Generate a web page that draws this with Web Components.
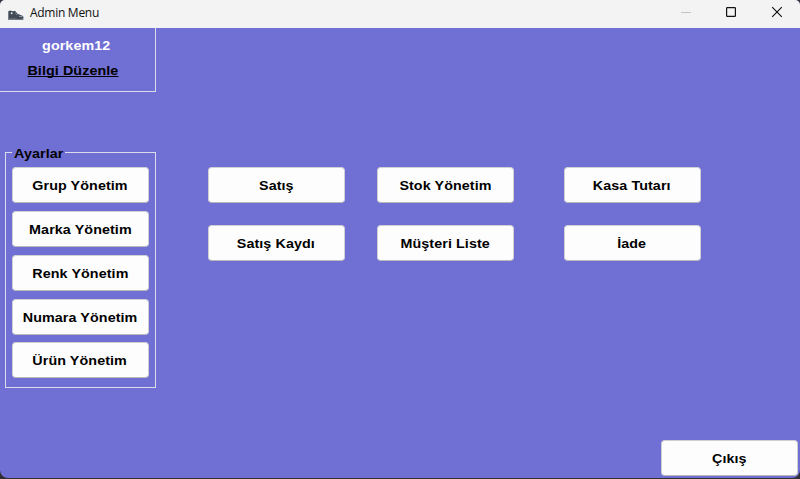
<!DOCTYPE html>
<html lang="tr">
<head>
<meta charset="utf-8">
<title>Admin Menu</title>
<style>
html,body{margin:0;height:100%;overflow:hidden;background:#303034}
body{font:bold 13.5px/16px "Liberation Sans",Arial,sans-serif;letter-spacing:.08px;color:#000}
</style>
</head>
<body>
<admin-window></admin-window>
<script>
const define = (name, html) => customElements.define(name, class extends HTMLElement {
  constructor() {
    super();
    this.attachShadow({ mode: 'open' }).innerHTML = html;
  }
});

define('menu-button', `
<style>
:host{box-sizing:border-box;display:flex;align-items:center;justify-content:center;width:137px;height:36px;padding:2px 1px 0 0;background:#fdfdfd;border:1px solid #d0d0d4;border-bottom-color:#b9b9bd;border-radius:4px;white-space:nowrap}
span{transform:scaleX(1.06)}
</style><span><slot></slot></span>`);

define('title-bar', `
<style>
:host{box-sizing:border-box;display:flex;align-items:center;height:28px;background:#f3f3f3;padding-left:8px;font:12px/16px "Open Sans","Noto Sans",sans-serif;letter-spacing:-.28px;color:#111}
.shoe{width:16px;height:11px;margin:2px 6px 0 0}
.text{flex:1;padding-bottom:2px}
.controls{width:46px;height:26px;flex:none;margin-bottom:2px}
</style>
<svg class="shoe" viewBox="0 0 16 11"><path d="M.3 1.2 2 .4 5 1.2 7 .7 9.5 3.8 15 6 15.7 8 13 9.8H.3Z" fill="#414b57"/><path d="M0 8.5h8l2 .7 5.8-.5-.5 1.3H0Z" fill="#747b84"/><circle cx="3.7" cy="3.3" r="1" fill="#e4e6e8"/><path d="m7.2 3.2 1.3-.7m-.2 2 1.5-.7m1.2 2.6 3.5.2" stroke="#b7bcc2" stroke-width=".7" fill="none"/></svg>
<span class="text"><slot></slot></span>
<svg class="controls" viewBox="0 0 46 26"><path d="M19 12.5h10" stroke="#c3c3c3"/></svg>
<svg class="controls" viewBox="0 0 46 26"><rect x="18.6" y="7.6" width="8.8" height="8.8" rx=".7" fill="none" stroke="#111" stroke-width="1.2"/></svg>
<svg class="controls" viewBox="0 0 46 26"><path d="m18.2 7.2 9.6 9.6m0-9.6-9.6 9.6" stroke="#111" stroke-width="1.15"/></svg>`);

define('user-panel', `
<style>
:host{box-sizing:border-box;display:flex;flex-direction:column;align-items:center;width:156px;height:64px;padding:10px 2px 0 0;gap:9px;border:solid #dcdcea;border-width:0 1px 1px 0}
.name{color:#fff;transform:scaleX(1.06)}
.link{margin-right:8px;transform:scaleX(1.06)}
.link span{text-decoration:underline;text-underline-offset:1px;text-decoration-thickness:1px;text-decoration-skip-ink:none}
</style><div class="name"><slot name="user"></slot></div><div class="link"><span><slot></slot></span></div>`);

define('group-box', `
<style>
:host{display:block;width:151px}
fieldset{box-sizing:border-box;height:243px;min-width:0;margin:0;border:1px solid #dcdcea;padding:6px 6px 0}
legend{height:15px;padding:1px 4px 0 2px;line-height:16px;box-sizing:border-box}
legend span{display:inline-block;transform:scaleX(1.06);transform-origin:left}
.items{display:grid;row-gap:8px;padding-top:1px}
::slotted(menu-button:last-of-type){margin-top:-1px}
</style><fieldset><legend><span><slot name="caption"></slot></span></legend><div class="items"><slot></slot></div></fieldset>`);

define('admin-window', `
<style>
:host{display:flex;flex-direction:column;width:800px;height:478px;background:#706fd3;border-radius:5px 5px 8px 8px;overflow:hidden}
main{flex:1;display:grid;grid-template-columns:208px 1fr;grid-template-rows:117px 1fr 38px}
user-panel{grid-area:1/1}
group-box{grid-area:2/1;margin-left:5px}
.actions{grid-area:2/2;display:grid;grid-template-columns:169px 187px 137px;gap:22px 0;align-content:start;padding-top:22px}
.exit{grid-area:3/2;justify-self:end;margin-right:2px}
</style>
<title-bar>Admin Menu</title-bar>
<main>
<user-panel><span slot="user">gorkem12</span>Bilgi Düzenle</user-panel>
<group-box><span slot="caption">Ayarlar</span>
<menu-button>Grup Yönetim</menu-button><menu-button>Marka Yönetim</menu-button><menu-button>Renk Yönetim</menu-button><menu-button>Numara Yönetim</menu-button><menu-button>Ürün Yönetim</menu-button>
</group-box>
<div class="actions"><menu-button>Satış</menu-button><menu-button>Stok Yönetim</menu-button><menu-button>Kasa Tutarı</menu-button><menu-button>Satış Kaydı</menu-button><menu-button>Müşteri Liste</menu-button><menu-button>İade</menu-button></div>
<menu-button class="exit">Çıkış</menu-button>
</main>`);
</script>
</body>
</html>
